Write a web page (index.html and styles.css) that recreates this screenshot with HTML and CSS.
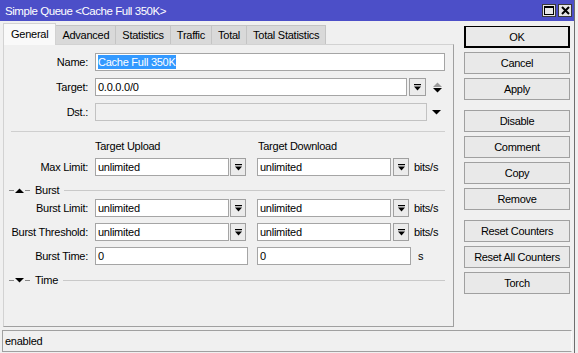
FILE: index.html
```html
<!DOCTYPE html>
<html lang="en">
<head>
    <meta charset="UTF-8">
    <title>Simple Queue &lt;Cache Full 350K&gt;</title>
    <link rel="stylesheet" href="styles.css">
</head>
<body>
<div class="window">
    <div class="titlebar">
        <span class="title">Simple Queue &lt;Cache Full 350K&gt;</span>
        <div class="win-controls">
            <span class="ctl"><svg width="10" height="9" viewBox="0 0 10 9"><rect x="0.5" y="0.5" width="9" height="8" fill="none" stroke="#000"/><rect x="0" y="0" width="10" height="2" fill="#000"/></svg></span>
            <span class="ctl"><svg width="9" height="9" viewBox="0 0 9 9"><path d="M1 1 L8 8 M8 1 L1 8" stroke="#000" stroke-width="2"/></svg></span>
        </div>
    </div>

    <div class="main">
        <div class="left">
            <div class="tabs">
                <div class="tab active">General</div>
                <div class="tab">Advanced</div>
                <div class="tab">Statistics</div>
                <div class="tab">Traffic</div>
                <div class="tab">Total</div>
                <div class="tab">Total Statistics</div>
            </div>

            <div class="panel">
                <div class="row first">
                    <label class="lbl">Name:</label>
                    <div class="field w-name"><span class="sel">Cache Full 350K</span></div>
                </div>
                <div class="row">
                    <label class="lbl">Target:</label>
                    <div class="field w-target">0.0.0.0/0</div>
                    <span class="dd-btn wide"><svg width="7" height="7" viewBox="0 0 7 7"><rect x="0" y="0" width="7" height="1.2"/><path d="M0 2.5 H7 L3.5 6.5 Z"/></svg></span>
                    <span class="updown"><svg width="9" height="11" viewBox="0 0 9 11"><path d="M0 5 L4.5 0.5 L9 5 Z" fill="#9a9a9a"/><path d="M0 6 H9 L4.5 10.5 Z" fill="#000"/></svg></span>
                </div>
                <div class="row">
                    <label class="lbl">Dst.:</label>
                    <div class="field disabled w-dst"></div>
                    <span class="down-arrow"><svg width="9" height="5" viewBox="0 0 9 5"><path d="M0 0 H9 L4.5 4.5 Z"/></svg></span>
                </div>

                <div class="divider"></div>

                <div class="col-heads">
                    <span class="head-up">Target Upload</span>
                    <span>Target Download</span>
                </div>
                <div class="row limit">
                    <label class="lbl">Max Limit:</label>
                    <div class="field w-half">unlimited</div>
                    <span class="dd-btn"><svg width="7" height="7" viewBox="0 0 7 7"><rect x="0" y="0" width="7" height="1.2"/><path d="M0 2.5 H7 L3.5 6.5 Z"/></svg></span>
                    <div class="field w-half second">unlimited</div>
                    <span class="dd-btn near"><svg width="7" height="7" viewBox="0 0 7 7"><rect x="0" y="0" width="7" height="1.2"/><path d="M0 2.5 H7 L3.5 6.5 Z"/></svg></span>
                    <span class="unit">bits/s</span>
                </div>

                <div class="group">
                    <span class="g-short"></span>
                    <svg class="g-arrow" width="9" height="5" viewBox="0 0 9 5"><path d="M0 5 L4.5 0.5 L9 5 Z"/></svg>
                    <span class="g-short"></span>
                    <span class="g-title">Burst</span>
                    <span class="g-line"></span>
                </div>
                <div class="row tight">
                    <label class="lbl">Burst Limit:</label>
                    <div class="field w-half">unlimited</div>
                    <span class="dd-btn"><svg width="7" height="7" viewBox="0 0 7 7"><rect x="0" y="0" width="7" height="1.2"/><path d="M0 2.5 H7 L3.5 6.5 Z"/></svg></span>
                    <div class="field w-half second">unlimited</div>
                    <span class="dd-btn near"><svg width="7" height="7" viewBox="0 0 7 7"><rect x="0" y="0" width="7" height="1.2"/><path d="M0 2.5 H7 L3.5 6.5 Z"/></svg></span>
                    <span class="unit">bits/s</span>
                </div>
                <div class="row step">
                    <label class="lbl">Burst Threshold:</label>
                    <div class="field w-half">unlimited</div>
                    <span class="dd-btn"><svg width="7" height="7" viewBox="0 0 7 7"><rect x="0" y="0" width="7" height="1.2"/><path d="M0 2.5 H7 L3.5 6.5 Z"/></svg></span>
                    <div class="field w-half second">unlimited</div>
                    <span class="dd-btn near"><svg width="7" height="7" viewBox="0 0 7 7"><rect x="0" y="0" width="7" height="1.2"/><path d="M0 2.5 H7 L3.5 6.5 Z"/></svg></span>
                    <span class="unit">bits/s</span>
                </div>
                <div class="row step">
                    <label class="lbl">Burst Time:</label>
                    <div class="field w-time">0</div>
                    <div class="field w-time2">0</div>
                    <span class="unit unit-s">s</span>
                </div>

                <div class="group group-time">
                    <span class="g-short"></span>
                    <svg class="g-arrow" width="9" height="5" viewBox="0 0 9 5"><path d="M0 0 H9 L4.5 4.5 Z"/></svg>
                    <span class="g-short"></span>
                    <span class="g-title">Time</span>
                    <span class="g-line"></span>
                </div>
            </div>
        </div>

        <div class="actions">
            <button class="btn default">OK</button>
            <button class="btn">Cancel</button>
            <button class="btn">Apply</button>
            <button class="btn spaced">Disable</button>
            <button class="btn">Comment</button>
            <button class="btn">Copy</button>
            <button class="btn">Remove</button>
            <button class="btn spaced">Reset Counters</button>
            <button class="btn">Reset All Counters</button>
            <button class="btn">Torch</button>
        </div>
    </div>

    <div class="statusbar">enabled</div>
</div>
</body>
</html>
```

FILE: styles.css
```css
body {
    margin: 0;
    background-color: #f0f0f0;
    font-family: "Liberation Sans", Arial, sans-serif;
    font-size: 11px;
    letter-spacing: -0.25px;
    color: #000;
}
.window {
    width: 575px;
    height: 353px;
    border-right: 1px solid #6e6e6e;
    box-sizing: border-box;
    background-color: #f0f0f0;
}
.titlebar {
    height: 21px;
    background-color: #4c4fc8;
    display: flex;
    align-items: center;
    padding-left: 5px;
}
.title {
    color: #fff;
    font-size: 11.5px;
    letter-spacing: -0.45px;
    flex: 1;
}
.win-controls {
    display: flex;
    gap: 2px;
    margin-right: 2px;
    margin-top: -1px;
}
.ctl {
    width: 14px;
    height: 13px;
    box-sizing: border-box;
    background-color: #e6e6e6;
    border: 1px solid #3a3a3a;
    display: flex;
    align-items: center;
    justify-content: center;
}
.main {
    height: 309px;
    display: flex;
}
.left {
    margin-left: 3px;
    width: 451px;
    padding-top: 2px;
}
.tabs {
    height: 21px;
    display: flex;
    align-items: flex-end;
}
.tab {
    height: 19px;
    line-height: 18px;
    padding: 0 6px;
    box-sizing: border-box;
    background-color: #d9d9d9;
    border: 1px solid #c4c4c4;
    border-left: none;
    border-bottom: none;
}
.tab.active {
    height: 22px;
    line-height: 21px;
    padding: 0 7px;
    background-color: #f9f9f9;
    border: 1px solid #d2d2d2;
    border-bottom: none;
    margin-bottom: -1px;
    position: relative;
    z-index: 1;
}
.panel {
    height: 283px;
    box-sizing: border-box;
    border: 1px solid #d2d2d2;
    border-right-color: #a0a0a0;
    border-bottom-color: #a0a0a0;
}
.row {
    display: flex;
    align-items: center;
    height: 18px;
    margin-top: 7px;
}
.row.first {
    margin-top: 8px;
}
.row.limit {
    margin-top: 5px;
}
.row.tight {
    margin-top: 3px;
}
.row.step {
    margin-top: 6px;
}
.lbl {
    width: 84px;
    text-align: right;
    margin-right: 7px;
    white-space: nowrap;
}
.field {
    height: 18px;
    box-sizing: border-box;
    background-color: #fff;
    border: 1px solid #a5a5a5;
    padding-left: 2px;
    line-height: 16px;
    white-space: nowrap;
}
.field.disabled {
    background-color: #f0f0f0;
    border-color: #c2c2c2;
}
.sel {
    background-color: #3399ff;
    color: #fff;
    display: inline-block;
    line-height: 14px;
}
.w-name { width: 350px; }
.w-target { width: 312px; }
.w-dst { width: 332px; }
.w-half { width: 134px; }
.w-half.second { margin-left: 11px; }
.w-time { width: 153px; }
.w-time2 { width: 154px; margin-left: 9px; }
.dd-btn {
    width: 16px;
    height: 18px;
    box-sizing: border-box;
    margin-left: 1px;
    background-color: #ebebeb;
    border: 1px solid #a0a0a0;
    display: flex;
    align-items: center;
    justify-content: center;
}
.dd-btn.wide {
    margin-left: 2px;
    width: 17px;
}
.dd-btn.near {
    margin-left: 2px;
}
.updown {
    margin-left: 7px;
    display: flex;
}
.down-arrow {
    margin-left: 5px;
    display: flex;
}
.unit {
    margin-left: 5px;
}
.unit-s {
    margin-left: 7px;
}
.divider {
    margin: 10px 8px 0 7px;
    border-top: 1px solid #cfcfcf;
}
.col-heads {
    display: flex;
    height: 14px;
    line-height: 14px;
    margin-top: 7px;
    padding-left: 91px;
}
.head-up {
    width: 163px;
}
.group {
    display: flex;
    align-items: center;
    height: 12px;
    margin: 8px 8px 0 5px;
}
.group-time {
    margin-top: 9px;
}
.g-short {
    width: 5px;
    border-top: 1px solid #8a8a8a;
}
.g-arrow {
    margin: 0 1px;
}
.g-title {
    margin-left: 5px;
}
.g-line {
    flex: 1;
    margin-left: 5px;
    border-top: 1px solid #c9c9c9;
}
.actions {
    margin-left: 10px;
    padding-top: 5px;
    width: 106px;
    display: flex;
    flex-direction: column;
}
.btn {
    height: 22px;
    margin-bottom: 4px;
    box-sizing: border-box;
    background-color: #e9e9e9;
    border: 1px solid #a0a0a0;
    font-family: "Liberation Sans", Arial, sans-serif;
    font-size: 11px;
    letter-spacing: -0.3px;
    color: #000;
    padding: 0;
}
.btn.default {
    border: 1px solid #000;
    box-shadow: inset 1px 0 0 #000, inset -1px -1px 0 #000;
}
.btn.spaced {
    margin-top: 6px;
}
.statusbar {
    margin-left: 2px;
    width: 570px;
    height: 22px;
    box-sizing: border-box;
    border: 1px solid #a0a0a0;
    border-right-color: #fafafa;
    padding-left: 2px;
    line-height: 20px;
}
```
